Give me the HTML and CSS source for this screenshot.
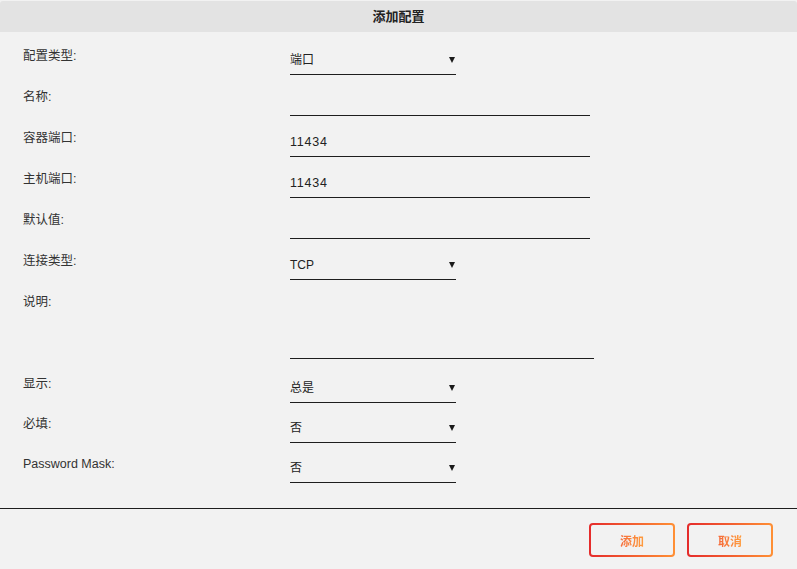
FILE: index.html
```html
<!DOCTYPE html>
<html lang="zh">
<head>
<meta charset="utf-8">
<title>添加配置</title>
<link rel="stylesheet" href="styles.css">
</head>
<body>
<div class="dialog">
  <div class="header">添加配置</div>
  <div class="form">
    <div class="row">
      <div class="label">配置类型:</div>
      <div class="field select"><span>端口</span><span class="arrow"></span></div>
    </div>
    <div class="row">
      <div class="label">名称:</div>
      <div class="field input"></div>
    </div>
    <div class="row">
      <div class="label">容器端口:</div>
      <div class="field input"><span class="num">11434</span></div>
    </div>
    <div class="row">
      <div class="label">主机端口:</div>
      <div class="field input"><span class="num">11434</span></div>
    </div>
    <div class="row">
      <div class="label">默认值:</div>
      <div class="field input"></div>
    </div>
    <div class="row">
      <div class="label">连接类型:</div>
      <div class="field select"><span>TCP</span><span class="arrow"></span></div>
    </div>
    <div class="row row-tall">
      <div class="label">说明:</div>
      <div class="field textarea"></div>
    </div>
    <div class="row row-tight">
      <div class="label">显示:</div>
      <div class="field select"><span>总是</span><span class="arrow"></span></div>
    </div>
    <div class="row row-tight">
      <div class="label">必填:</div>
      <div class="field select"><span>否</span><span class="arrow"></span></div>
    </div>
    <div class="row">
      <div class="label">Password Mask:</div>
      <div class="field select"><span>否</span><span class="arrow"></span></div>
    </div>
  </div>
  <div class="footer">
    <button class="btn"><span class="btn-text">添加</span></button>
    <button class="btn"><span class="btn-text">取消</span></button>
  </div>
</div>
</body>
</html>
```

FILE: styles.css
```css
html, body {
  margin: 0;
  padding: 0;
  background: #f2f2f2;
}
body {
  font-family: "Liberation Sans", "Noto Sans CJK SC", sans-serif;
  font-size: 12px;
  color: #2a2a2a;
}
.dialog {
  width: 797px;
  height: 569px;
  display: flex;
  flex-direction: column;
}
.header {
  margin-top: 1px;
  height: 31px;
  line-height: 31px;
  background: #e3e3e3;
  border-radius: 3px 3px 0 0;
  text-align: center;
  font-weight: bold;
  font-size: 13px;
  color: #222;
}
.form {
  padding: 9px 0 0 23px;
}
.row {
  display: flex;
  margin-bottom: 7px;
}
.row:last-child {
  margin-bottom: 0;
}
.row-tall {
  margin-bottom: 10px;
}
.row-tight {
  margin-bottom: 6px;
}
.label {
  width: 267px;
  padding-top: 7px;
  line-height: 16px;
  font-size: 12.5px;
  color: #333;
}
.field {
  box-sizing: border-box;
  height: 34px;
  padding-top: 11px;
  line-height: 16px;
  border-bottom: 1px solid #1e1e1e;
  color: #222;
}
.select {
  width: 166px;
  display: flex;
  justify-content: space-between;
  align-items: flex-start;
}
.input {
  width: 300px;
}
.textarea {
  width: 304px;
  height: 72px;
}
.num {
  font-size: 12.5px;
  letter-spacing: 0.8px;
}
.arrow {
  margin-top: 5px;
  margin-right: 1px;
  width: 0;
  height: 0;
  border-left: 3px solid transparent;
  border-right: 3px solid transparent;
  border-top: 6px solid #1a1a1a;
}
.footer {
  border-top: 1px solid #1e1e1e;
  margin-top: 25px;
  padding: 14px 24px 0 0;
  display: flex;
  justify-content: flex-end;
  gap: 12px;
}
.btn {
  width: 86px;
  height: 34px;
  border: 2px solid transparent;
  border-radius: 4px;
  background: linear-gradient(#f2f2f2, #f2f2f2) padding-box,
              linear-gradient(to right, #e52b2b, #ff9035) border-box;
  font-family: "Liberation Sans", "Noto Sans CJK SC", sans-serif;
  font-size: 12px;
  font-weight: bold;
  padding: 0;
  cursor: pointer;
}
.btn-text {
  background: linear-gradient(to right, #f56a3a, #ff9d3e);
  -webkit-background-clip: text;
  background-clip: text;
  color: transparent;
}
```
